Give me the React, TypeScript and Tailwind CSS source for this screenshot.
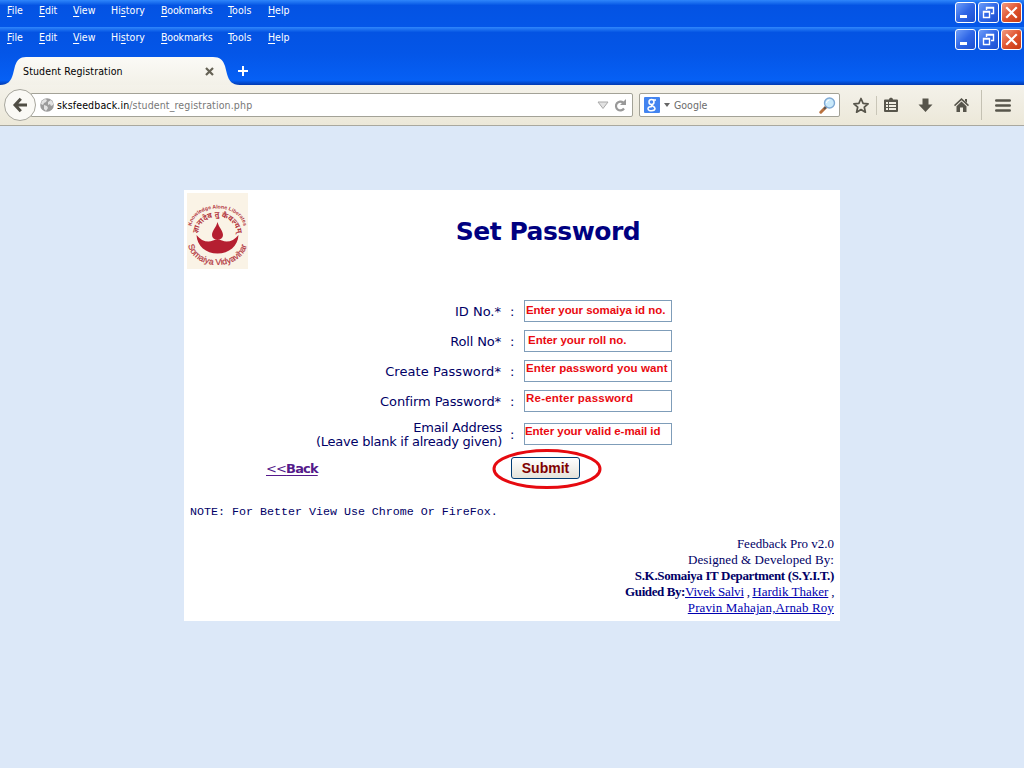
import type { ReactNode } from "react";

const ui = "font-['DejaVu_Sans_Condensed','DejaVu_Sans',sans-serif] [font-stretch:condensed]";

const menu: { pre: string; key: string; post: string; w: string }[] = [
  { pre: "", key: "F", post: "ile", w: "w-[32px] tracking-[0.05px]" },
  { pre: "", key: "E", post: "dit", w: "w-[34px] tracking-[0px]" },
  { pre: "", key: "V", post: "iew", w: "w-[38px] tracking-[0px]" },
  { pre: "Hi", key: "s", post: "tory", w: "w-[50px] tracking-[0.05px]" },
  { pre: "", key: "B", post: "ookmarks", w: "w-[67px] tracking-[-0.15px]" },
  { pre: "", key: "T", post: "ools", w: "w-[40px] tracking-[0.1px]" },
  { pre: "", key: "H", post: "elp", w: "w-[30px] tracking-[0px]" },
];

function WinButton({ red, children }: { red?: boolean; children: ReactNode }) {
  return (
    <div
      className={
        "h-[21px] w-[21px] rounded-[3px] border border-white " +
        (red
          ? "bg-linear-to-br from-[#f09a80] via-[#e0532d] to-[#c63a14]"
          : "bg-linear-to-br from-[#6f9df8] via-[#2f66e6] to-[#1c4fd0]")
      }
    >
      <svg width="19" height="19" viewBox="0 0 19 19" fill="none" stroke="#fff">
        {children}
      </svg>
    </div>
  );
}

function MenuBar() {
  return (
    <div className="flex h-[27px] justify-between bg-linear-to-b from-[#2f86fb] via-[#0453e3] via-20% to-[#0456e8] pr-[2px] pl-[7px]">
      <div className={"flex pt-[3px] text-[10.5px] leading-[14px] text-white " + ui}>
        {menu.map((m) => (
          <span key={m.key} className={"shrink-0 whitespace-nowrap " + m.w}>
            {m.pre}
            <span className="underline underline-offset-2">{m.key}</span>
            {m.post}
          </span>
        ))}
      </div>
      <div className="flex gap-[2px] pt-[2px]">
        <WinButton>
          <path d="M4 13.5h7" strokeWidth="3" />
        </WinButton>
        <WinButton>
          <path d="M7.500 7V4.500h7v6H12M7 5h8" strokeWidth="1.400" />
          <path d="M4.500 8.500h6v6h-6zM4 9h7" strokeWidth="1.400" />
        </WinButton>
        <WinButton red>
          <path d="M5 5l9 9M14 5l-9 9" strokeWidth="2.200" strokeLinecap="square" />
        </WinButton>
      </div>
    </div>
  );
}

function TabStrip() {
  return (
    <div className="relative flex h-[31px] bg-linear-to-b from-[#0456e8] via-[#0660f5] via-85% to-[#0239b0]">
      <svg className="absolute top-0 left-0" width="245" height="31" viewBox="0 0 245 31">
        <defs>
          <linearGradient id="tab" x1="0" y1="0" x2="0" y2="1">
            <stop offset="0" stopColor="#fbfaf6" />
            <stop offset="1" stopColor="#f3f1e8" />
          </linearGradient>
        </defs>
        <path
          d="M0 31C8 31 11 27 13 20L15 12C17 6 20 3 26 3H213C220 3 223 6 225 12L227 20C229 27 232 31 240 31Z"
          fill="url(#tab)"
        />
      </svg>
      <div className={"relative flex w-full pt-[10px] pl-[23px] text-[10.5px] leading-[14px] text-black " + ui}>
        <span className="w-[182px] tracking-[0.13px]">Student Registration</span>
        <svg className="mt-[3px]" width="9" height="9" viewBox="0 0 9 9" stroke="#656255" strokeWidth="2.200">
          <path d="M1 1l7 7M8 1L1 8" />
        </svg>
        <svg className="mt-[1px] ml-[23px]" width="12" height="12" viewBox="0 0 12 12" stroke="#fff" strokeWidth="2">
          <path d="M6 1v10M1 6h10" />
        </svg>
      </div>
    </div>
  );
}

function Toolbar() {
  return (
    <div className="flex h-[41px] items-center border-b border-[#a9a89f] bg-linear-to-b from-[#f4f2ea] to-[#ece8d9]">
      <div className="z-10 ml-[4px] flex h-[32px] w-[32px] items-center justify-center rounded-full border border-[#a7a69d] bg-[#faf9f5]">
        <svg width="16" height="16" viewBox="0 0 16 16" fill="none" stroke="#504e45" strokeWidth="3">
          <path d="M8.800 1.800L3 8l5.800 6.200M3 8h12" />
        </svg>
      </div>
      <div className={"-ml-[5px] flex h-[24px] w-[602px] items-center rounded-r-[2px] border border-[#a3a297] bg-white pl-[8px] text-[10.5px] " + ui}>
        <svg width="14" height="14" viewBox="0 0 14 14">
          <circle cx="7" cy="7" r="6.800" fill="#9b9b9b" />
          <path d="M2 3l3-2 2 1-1 2-2 1-1 2-2-1zM8 4l3-2 2 3v2l-2 1-1-2-2 1zM4 7l3 1 1 2-2 3-2-2z" fill="#e2e2e2" />
        </svg>
        <span className="ml-[3px] leading-[14px] tracking-[0.14px] text-[#777]">
          <span className="text-black">sksfeedback.in</span>/student_registration.php
        </span>
        <svg className="mr-[5px] ml-auto" width="12" height="9" viewBox="0 0 12 9" fill="#e2e2e2" stroke="#a9a9a9">
          <path d="M1 1h10L6 7.500z" />
        </svg>
        <svg className="mr-[5px]" width="13" height="13" viewBox="0 0 13 13">
          <path d="M10 9.500A4.400 4.400 0 1 1 9.200 3.600" fill="none" stroke="#999" strokeWidth="2.200" />
          <path d="M12 0v6H6z" fill="#999" />
        </svg>
      </div>
      <div className={"ml-[6px] flex h-[24px] w-[201px] items-center rounded-[2px] border border-[#a3a297] bg-white pl-[4px] text-[10.5px] text-[#6c6c6c] " + ui}>
        <svg width="16" height="16" viewBox="0 0 16 16">
          <rect width="16" height="16" rx="1" fill="#4384f0" />
          <g fill="none" stroke="#fff" strokeWidth="1.500">
            <circle cx="7.500" cy="5" r="2.500" />
            <path d="M9 3h3M7.500 7.500c-1 1.500 3.500 1.500 3.500 4 0 3-7 3-7 .300 0-2 2.500-2.300 4-2.300" />
          </g>
        </svg>
        <svg className="ml-[4px]" width="6" height="4" viewBox="0 0 6 4" fill="#666">
          <path d="M0 0h6L3 4z" />
        </svg>
        <span className="ml-[4px] leading-[14px]">Google</span>
        <svg className="mr-[3px] ml-auto" width="17" height="17" viewBox="0 0 17 17">
          <path d="M7 10L1.800 15.200" stroke="#b9713e" strokeWidth="3" strokeLinecap="round" />
          <path d="M7 10L5 12" stroke="#555" strokeWidth="2" />
          <circle cx="10.500" cy="6" r="5" fill="#c9e9fb" stroke="#7fa9d4" strokeWidth="1.400" />
          <path d="M7.500 6a3 3 0 0 1 3-3" stroke="#fff" fill="none" />
        </svg>
      </div>
      <svg className="ml-[12px] shrink-0" width="18" height="17" viewBox="0 0 18 17">
        <path
          d="M9 1.500l2.100 4.800 5 .500-3.800 3.400 1.100 5L9 12.600l-4.400 2.600 1.100-5L1.900 6.800l5-.500z"
          fill="none"
          stroke="#57554b"
          strokeWidth="1.700"
          strokeLinejoin="round"
        />
      </svg>
      <div className="ml-[6px] h-[19px] w-px bg-[#c9c6b8]" />
      <svg className="ml-[7px] shrink-0" width="15" height="16" viewBox="0 0 15 16">
        <path d="M5 2.500C5 0 9 0 9 2.500h4q1 0 1 1V14q0 1-1 1H1q-1 0-1-1V3.500q0-1 1-1z" fill="#57554b" />
        <path d="M2 5h10v2H2zM2 8h2v2H2zM5 8h7v2H5zM2 11h2v2H2zM5 11h7v2H5z" fill="#f0ede2" />
        <path d="M4 5h1v2H4z" fill="#57554b" />
      </svg>
      <svg className="ml-[19px] shrink-0" width="15" height="15" viewBox="0 0 15 15" fill="#57554b">
        <path d="M4.500 0.500h6v6h4L7.500 14 0.500 6.500h4z" />
      </svg>
      <svg className="ml-[20px] shrink-0" width="17" height="16" viewBox="0 0 17 16" fill="#57554b">
        <path d="M8.500 1L16 8l-1 1.200-6.500-6L2 9.200 1 8z" />
        <path d="M12 2h2v4l-2-2zM3.500 9.200l5-4.600 5 4.600V15h-3.500v-4.500h-3V15H3.500z" />
      </svg>
      <div className="ml-[11px] h-[30px] w-px bg-[#c4c1b3]" />
      <svg className="ml-[13px] shrink-0" width="16" height="13" viewBox="0 0 16 13" stroke="#57554b" strokeWidth="2.600" strokeLinecap="round">
        <path d="M1.300 1.500h13.400M1.300 6.500h13.400M1.300 11.500h13.400" />
      </svg>
    </div>
  );
}

function Logo() {
  return (
    <svg className="shrink-0" width="61" height="76" viewBox="0 0 61 76">
      <defs>
        <path id="outer" d="M4.500 34A26 18.500 0 0 1 56.500 34" />
        <path id="inner" d="M11 41A19.500 17 0 0 1 50 41" />
        <path id="lower" d="M1 49A29.500 23 0 0 0 60 49" />
      </defs>
      <rect width="61" height="76" fill="#faf3e6" />
      <g fill="#b2353e" fontFamily="Liberation Sans, sans-serif" fontWeight="bold" textAnchor="middle">
        <text fontSize="5.200">
          <textPath href="#outer" startOffset="50%">Knowledge Alone Liberates</textPath>
        </text>
        <text fontSize="7.500" fontFamily="Noto Sans, sans-serif">
          <textPath href="#inner" startOffset="50%">ज्ञानादेव तु कैवल्यम्</textPath>
        </text>
        <text fontSize="8.600" fontWeight="normal" stroke="#b2353e" strokeWidth="0.200">
          <textPath href="#lower" startOffset="50%">Somaiya Vidyavihar</textPath>
        </text>
      </g>
      <path d="M30.500 29C32 35 36 37.500 36 42A5.500 5 0 0 1 25 42C25 37.500 29 35 30.500 29Z" fill="#b51f31" />
      <path
        d="M9.500 42C14 48 21 50 26 47.500C29 46 32 46 35 47.500C40 50 47 48 51.500 42C51 53 42 60.500 30.500 60.500S10 53 9.500 42Z"
        fill="#b51f31"
      />
    </svg>
  );
}

const fields: { label: string[]; hint: string; row: string; labelCls: string; box: string }[] = [
  { label: ["ID No.*"], hint: "Enter your somaiya id no.", row: "h-[30px]", labelCls: "pr-px tracking-[0px]", box: "pl-[1px] pt-[2px] tracking-[-0.05px]" },
  { label: ["Roll No*"], hint: "Enter your roll no.", row: "h-[30px]", labelCls: "pr-px tracking-[-0.15px]", box: "pl-[3px] pt-[2px] tracking-[-0.03px]" },
  { label: ["Create Password*"], hint: "Enter password you want", row: "h-[30px]", labelCls: "pr-px tracking-[0.08px]", box: "pl-[1px] tracking-[0.1px]" },
  { label: ["Confirm Password*"], hint: "Re-enter password", row: "h-[30px]", labelCls: "pr-px tracking-[-0.1px]", box: "pl-[1px] tracking-[0.22px]" },
  { label: ["Email Address", "(Leave blank if already given)"], hint: "Enter your valid e-mail id", row: "h-[36px]", labelCls: "tracking-[-0.25px]", box: "tracking-[-0.05px]" },
];

export default function App() {
  return (
    <div className="flex h-[768px] w-[1024px] flex-col overflow-hidden bg-[#dce8f8]">
      <MenuBar />
      <MenuBar />
      <TabStrip />
      <Toolbar />
      <main className="mx-auto mt-[64px] h-[431px] w-[656px] bg-white font-['DejaVu_Sans',sans-serif] text-[13px] text-[#000066]">
        <div className="flex h-[106px] px-[3px] pt-[3px]">
          <Logo />
          <h1 className="w-[600px] pt-[23px] text-center text-[25px] leading-[32px] font-bold tracking-[-0.5px] text-[#000080]">
            <span className="pl-[11px]">Set Password</span>
          </h1>
        </div>
        {fields.map((f) => (
          <div key={f.hint} className={"flex items-center " + f.row}>
            <div className={"w-[318px] pt-[2px] text-right leading-[14px] whitespace-nowrap " + f.labelCls}>
              {f.label.map((l) => (
                <div key={l}>{l}</div>
              ))}
            </div>
            <div className="w-[22px] pt-[2px] pl-[8px] leading-[14px]">:</div>
            <div
              className={
                "h-[22px] w-[148px] border border-[#7f9db9] bg-white font-['Liberation_Sans',sans-serif] text-[11.5px] leading-[15px] font-bold whitespace-nowrap text-[#ea0a10] " +
                f.box
              }
            >
              {f.hint}
            </div>
          </div>
        ))}
        <div className="flex h-[32px] items-center pl-[82px]">
          <a className="w-[245px] pt-px font-bold tracking-[-0.85px] text-[#551a8b] underline underline-offset-2">
            <span className="font-normal">&lt;&lt;</span>Back
          </a>
          <div className="relative">
            <button className="block h-[22px] w-[69px] rounded-[3px] border border-[#003c74] bg-linear-to-b from-white to-[#e5e3da] font-['Liberation_Sans',sans-serif] text-[14px] leading-[20px] font-bold tracking-[0px] text-[#800000]">
              Submit
            </button>
            <svg className="pointer-events-none absolute -top-[8px] -left-[19px]" width="110" height="40" viewBox="0 0 110 40">
              <ellipse cx="55" cy="20" rx="53" ry="18.500" fill="none" stroke="#e60a10" strokeWidth="3" />
            </svg>
          </div>
        </div>
        <p className="mt-[20px] pl-[6px] font-['Liberation_Mono',monospace] text-[11.67px] leading-[16px] whitespace-nowrap">
          NOTE: For Better View Use Chrome Or FireFox.
        </p>
        <div className="mt-[16px] pr-[6px] text-right font-['Liberation_Serif',serif] text-[13px] leading-[16px] whitespace-nowrap">
          <div>Feedback Pro v2.0</div>
          <div className="tracking-[0.08px]">Designed &amp; Developed By:</div>
          <div className="font-bold tracking-[-0.35px]">S.K.Somaiya IT Department (S.Y.I.T.)</div>
          <div>
            <b className="tracking-[-0.4px]">Guided By:</b>
            <a className="tracking-[-0.2px] text-[#0000b0] underline">Vivek Salvi</a>
            <span className="tracking-[-0.4px]"> , </span>
            <a className="text-[#0000b0] underline">Hardik Thaker</a>
            <span className="tracking-[-0.4px]"> ,</span>
          </div>
          <div className="tracking-[0.12px] text-[#0000b0] underline">Pravin Mahajan,Arnab Roy</div>
        </div>
      </main>
    </div>
  );
}
